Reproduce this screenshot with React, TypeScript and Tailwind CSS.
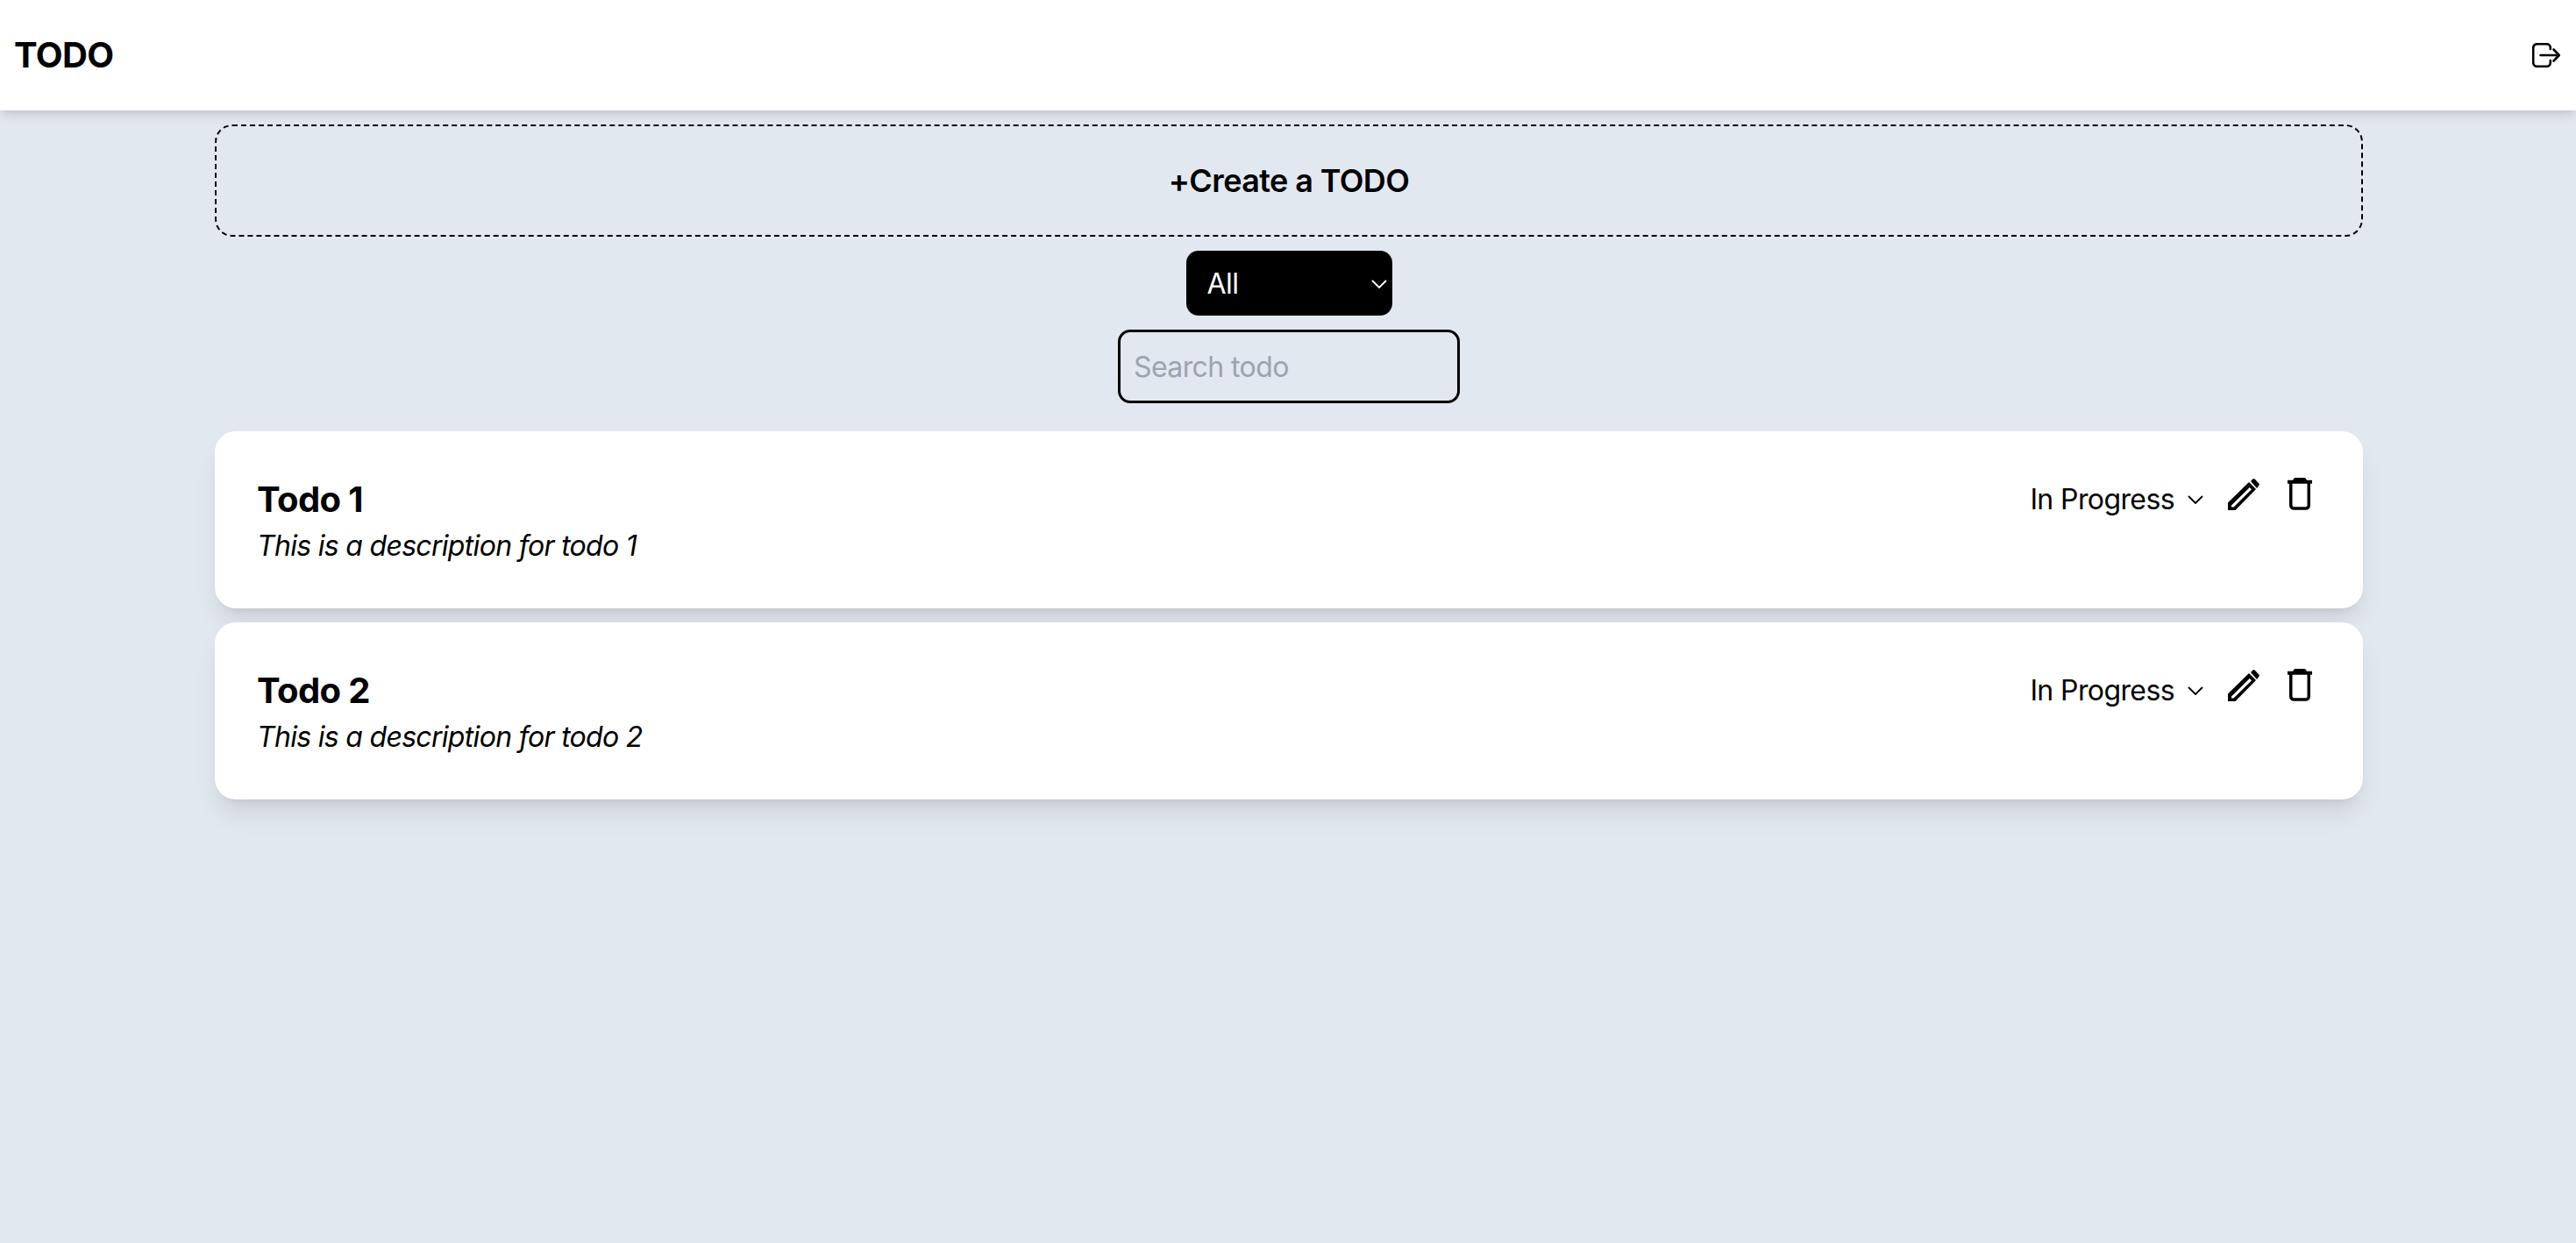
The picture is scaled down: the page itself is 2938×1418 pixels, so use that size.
const font = "font-['Inter',sans-serif]";

const Chevron = ({ color }: { color: string }) => (
  <svg width="18" height="10" viewBox="0 0 18 10" fill="none" stroke={color} strokeWidth="1.8" className="shrink-0">
    <path d="M1 1l8 8 8-8" />
  </svg>
);

const LogoutIcon = () => (
  <svg width="32" height="28" viewBox="0 0 32 28" fill="none" stroke="black" strokeWidth="2.6" strokeLinecap="round" strokeLinejoin="round">
    <path d="M20.800 7V5.500a4.300 4.300 0 0 0-4.300-4.300H5.500A4.300 4.300 0 0 0 1.200 5.500v17a4.300 4.300 0 0 0 4.300 4.300h11a4.300 4.300 0 0 0 4.300-4.300V20" />
    <path d="M9.500 14h21M24.500 7.500l6.300 6.500-6.300 6.500" />
  </svg>
);

const PencilIcon = () => (
  <svg width="36" height="36" viewBox="0 0 36 36">
    <path d="M0 36v-8.500L24 4l8 8-23.500 24z M4 32.500h2.500L27 12.200 24.800 10 4 30.500z" fill="black" fillRule="evenodd" />
    <path d="M26 3l2.200-2.200a1.800 1.800 0 0 1 2.600 0l4.400 4.400a1.800 1.800 0 0 1 0 2.600L33 11z" fill="black" />
  </svg>
);

const TrashIcon = () => (
  <svg width="28" height="37" viewBox="0 0 28 37" fill="none">
    <path d="M0 2.700h6L7.500 0.600Q8 0 9 0h10q1 0 1.500 0.600L22 2.700h6v4H0z" fill="black" />
    <path d="M3.750 6v25.500a3.500 3.500 0 0 0 3.500 3.500h13.500a3.500 3.500 0 0 0 3.500-3.500V6" stroke="black" strokeWidth="3.500" />
  </svg>
);

const TodoCard = ({ title, description }: { title: string; description: string }) => (
  <div className="w-full h-[202px] bg-white rounded-[24px] shadow-[0_20px_30px_-6px_rgba(0,0,0,0.1),0_8px_12px_-8px_rgba(0,0,0,0.1)] pl-[48px] pr-[58px] pt-[50px] flex justify-between">
    <div>
      <h2 className="text-[40px] leading-[56px] font-bold tracking-[-0.6px] text-black">{title}</h2>
      <p className="text-[32px] leading-[48px] mt-[1px] italic tracking-[-0.7px] text-black">{description}</p>
    </div>
    <div className="flex items-start">
      <div className="flex items-center gap-[15px] h-[56px] mr-[28px]">
        <span className="text-[32px] tracking-[-0.6px] text-black whitespace-nowrap">In Progress</span>
        <Chevron color="black" />
      </div>
      <div className="mt-[4px] mr-[32px]"><PencilIcon /></div>
      <div className="mt-[3px]"><TrashIcon /></div>
    </div>
  </div>
);

export default function App() {
  return (
    <div className={`${font} min-h-[1418px] bg-[#e2e8f0]`}>
      <header className="h-[126px] bg-white shadow-[0_8px_12px_-2px_rgba(0,0,0,0.1),0_4px_8px_-4px_rgba(0,0,0,0.1)] flex items-center justify-between pl-[16px] pr-[18px]">
        <h1 className="text-[40px] font-bold tracking-[-0.6px] text-black">TODO</h1>
        <LogoutIcon />
      </header>
      <main className="w-[2450px] ml-[245px] pt-[16px] flex flex-col items-center gap-[16px]">
        <button className="w-full h-[128px] border-2 border-dashed border-black rounded-[20px] text-[36px] font-semibold tracking-[-0.6px] text-black">
          +Create a TODO
        </button>
        <div className="w-[235px] h-[74px] pt-[2px] bg-black rounded-[14px] flex items-center justify-between pl-[24px] pr-[6px] text-white text-[32px] tracking-[-0.5px]">
          <span>All</span>
          <Chevron color="white" />
        </div>
        <input
          placeholder="Search todo"
          className="w-[390px] h-[84px] border-[3px] border-black rounded-[14px] px-[15px] text-[32px] tracking-[-0.6px] bg-transparent placeholder:text-[#9ca3af] outline-none"
        />
        <div className="w-full flex flex-col gap-[16px] mt-[16px]">
          <TodoCard title="Todo 1" description="This is a description for todo 1" />
          <TodoCard title="Todo 2" description="This is a description for todo 2" />
        </div>
      </main>
    </div>
  );
}
